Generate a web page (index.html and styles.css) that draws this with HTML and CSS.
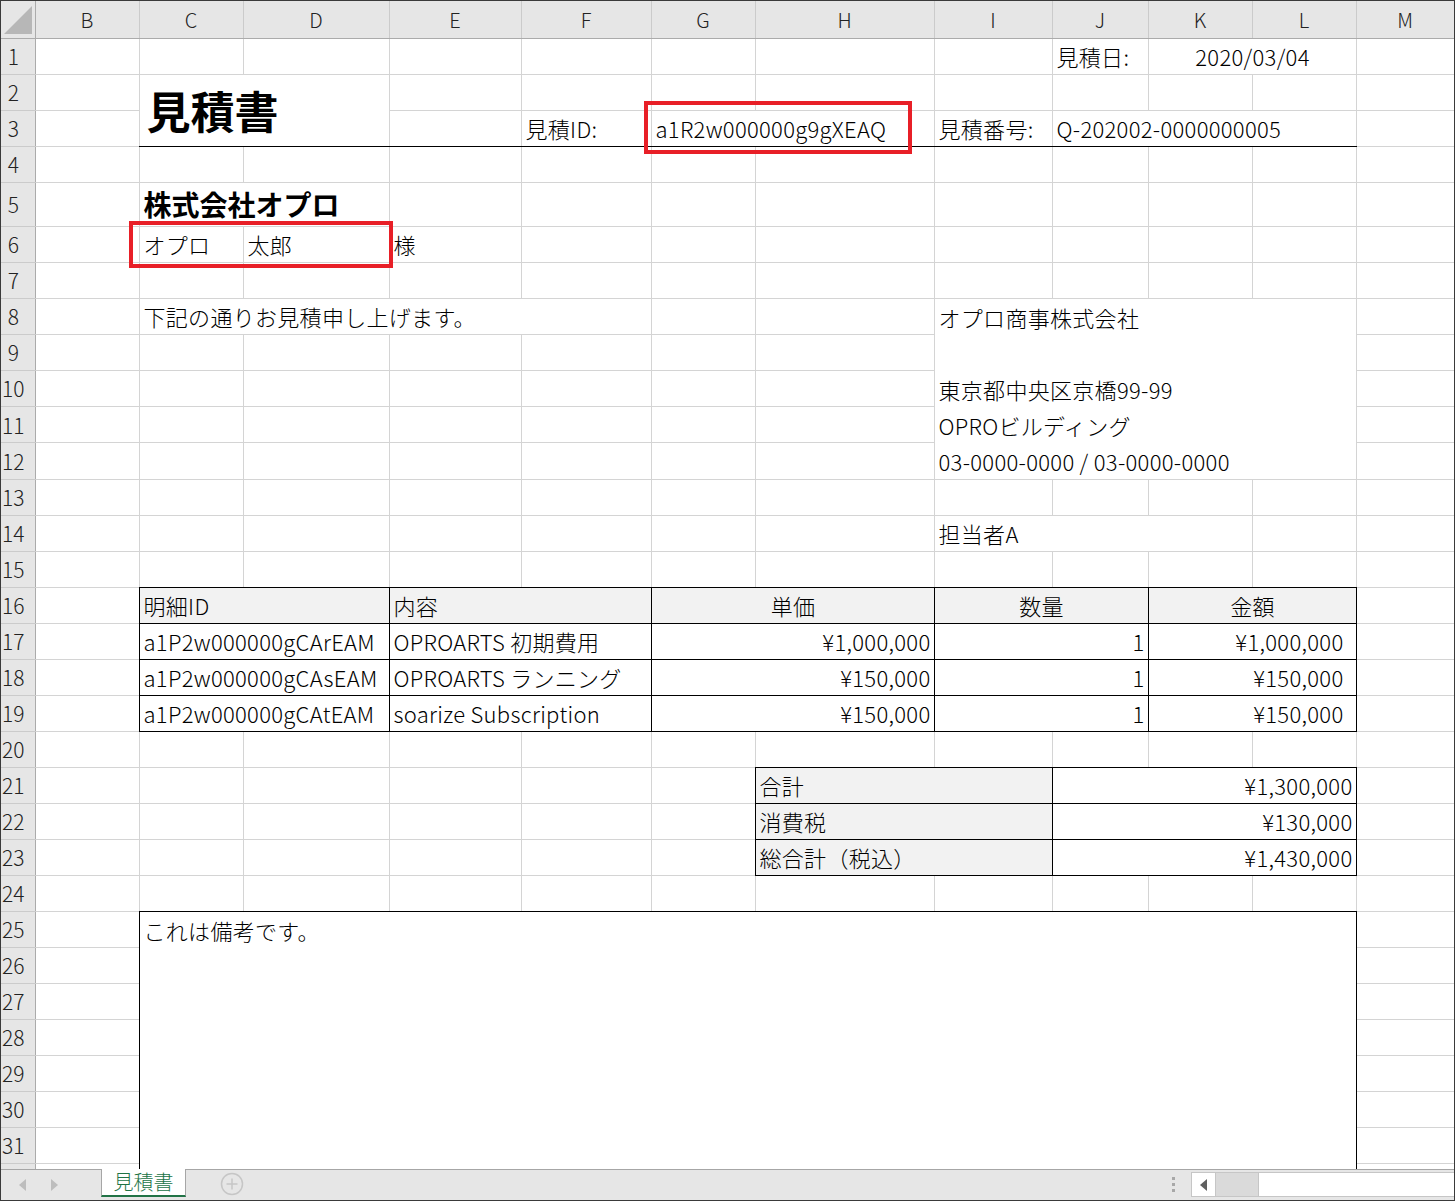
FILE: index.html
```html
<!DOCTYPE html>
<html lang="ja">
<head>
  <meta charset="UTF-8">
  <title>見積書</title>
  <link rel="stylesheet" href="styles.css">
</head>
<body>
  <div class="window">
    <!-- Feuille -->
    <div class="sheet-area">
      <table class="sheet">
        <colgroup>
          <col class="c-hdr"><col class="c-b"><col class="c-c"><col class="c-d"><col class="c-e"><col class="c-f"><col class="c-g"><col class="c-h"><col class="c-i"><col class="c-j"><col class="c-k"><col class="c-l"><col class="c-m">
        </colgroup>
        <thead>
          <tr class="col-head">
            <th class="corner"><svg width="28" height="28" viewBox="0 0 28 28"><polygon points="28,0 28,28 0,28" fill="#b7b7b7"/></svg></th>
            <th>B</th><th>C</th><th>D</th><th>E</th><th>F</th><th>G</th><th>H</th><th>I</th><th>J</th><th>K</th><th>L</th><th>M</th>
          </tr>
        </thead>
        <tbody>
          <tr><th class="rh">1</th><td></td><td></td><td></td><td></td><td></td><td></td><td></td><td></td><td>見積日:</td><td colspan="2" class="center">2020/03/04</td><td></td></tr>
          <tr><th class="rh">2</th><td></td><td colspan="2" rowspan="2" class="title bb">見積書</td><td></td><td></td><td></td><td></td><td></td><td></td><td></td><td></td><td></td></tr>
          <tr><th class="rh">3</th><td></td><td class="bb"></td><td class="bb">見積ID:</td><td colspan="2" class="bb">a1R2w000000g9gXEAQ</td><td class="bb">見積番号:</td><td colspan="3" class="bb">Q-202002-0000000005</td><td></td></tr>
          <tr><th class="rh">4</th><td></td><td></td><td></td><td></td><td></td><td></td><td></td><td></td><td></td><td></td><td></td><td></td></tr>
          <tr class="tall"><th class="rh">5</th><td></td><td colspan="2" class="company">株式会社オプロ</td><td></td><td></td><td></td><td></td><td></td><td></td><td></td><td></td><td></td></tr>
          <tr><th class="rh">6</th><td></td><td>オプロ</td><td>太郎</td><td>様</td><td></td><td></td><td></td><td></td><td></td><td></td><td></td><td></td></tr>
          <tr><th class="rh">7</th><td></td><td></td><td></td><td></td><td></td><td></td><td></td><td></td><td></td><td></td><td></td><td></td></tr>
          <tr>
            <th class="rh">8</th><td></td><td colspan="4">下記の通りお見積申し上げます。</td><td></td><td></td>
            <td colspan="4" rowspan="5" class="addr">
              <div>オプロ商事株式会社</div>
              <div>&nbsp;</div>
              <div>東京都中央区京橋99-99</div>
              <div>OPROビルディング</div>
              <div>03-0000-0000 / 03-0000-0000</div>
            </td>
            <td></td>
          </tr>
          <tr><th class="rh">9</th><td></td><td></td><td></td><td></td><td></td><td></td><td></td><td></td></tr>
          <tr><th class="rh">10</th><td></td><td></td><td></td><td></td><td></td><td></td><td></td><td></td></tr>
          <tr><th class="rh">11</th><td></td><td></td><td></td><td></td><td></td><td></td><td></td><td></td></tr>
          <tr><th class="rh">12</th><td></td><td></td><td></td><td></td><td></td><td></td><td></td><td></td></tr>
          <tr><th class="rh">13</th><td></td><td></td><td></td><td></td><td></td><td></td><td></td><td></td><td></td><td></td><td></td><td></td></tr>
          <tr><th class="rh">14</th><td></td><td></td><td></td><td></td><td></td><td></td><td></td><td colspan="3">担当者A</td><td></td><td></td></tr>
          <tr><th class="rh">15</th><td></td><td></td><td></td><td></td><td></td><td></td><td></td><td></td><td></td><td></td><td></td><td></td></tr>
          <!-- Détail -->
          <tr><th class="rh">16</th><td></td><td colspan="2" class="box head">明細ID</td><td colspan="2" class="box head">内容</td><td colspan="2" class="box head center">単価</td><td colspan="2" class="box head center">数量</td><td colspan="2" class="box head center">金額</td><td></td></tr>
          <tr><th class="rh">17</th><td></td><td colspan="2" class="box">a1P2w000000gCArEAM</td><td colspan="2" class="box">OPROARTS 初期費用</td><td colspan="2" class="box num">¥1,000,000</td><td colspan="2" class="box num">1</td><td colspan="2" class="box num amount">¥1,000,000</td><td></td></tr>
          <tr><th class="rh">18</th><td></td><td colspan="2" class="box">a1P2w000000gCAsEAM</td><td colspan="2" class="box">OPROARTS ランニング</td><td colspan="2" class="box num">¥150,000</td><td colspan="2" class="box num">1</td><td colspan="2" class="box num amount">¥150,000</td><td></td></tr>
          <tr><th class="rh">19</th><td></td><td colspan="2" class="box">a1P2w000000gCAtEAM</td><td colspan="2" class="box">soarize Subscription</td><td colspan="2" class="box num">¥150,000</td><td colspan="2" class="box num">1</td><td colspan="2" class="box num amount">¥150,000</td><td></td></tr>
          <tr><th class="rh">20</th><td></td><td></td><td></td><td></td><td></td><td></td><td></td><td></td><td></td><td></td><td></td><td></td></tr>
          <!-- Totaux -->
          <tr><th class="rh">21</th><td></td><td></td><td></td><td></td><td></td><td></td><td colspan="2" class="box head">合計</td><td colspan="3" class="box num">¥1,300,000</td><td></td></tr>
          <tr><th class="rh">22</th><td></td><td></td><td></td><td></td><td></td><td></td><td colspan="2" class="box head">消費税</td><td colspan="3" class="box num">¥130,000</td><td></td></tr>
          <tr><th class="rh">23</th><td></td><td></td><td></td><td></td><td></td><td></td><td colspan="2" class="box head">総合計（税込）</td><td colspan="3" class="box num">¥1,430,000</td><td></td></tr>
          <tr><th class="rh">24</th><td></td><td></td><td></td><td></td><td></td><td></td><td></td><td></td><td></td><td></td><td></td><td></td></tr>
          <!-- Remarques -->
          <tr><th class="rh">25</th><td></td><td colspan="10" rowspan="8" class="box note">これは備考です。</td><td></td></tr>
          <tr><th class="rh">26</th><td></td><td></td></tr>
          <tr><th class="rh">27</th><td></td><td></td></tr>
          <tr><th class="rh">28</th><td></td><td></td></tr>
          <tr><th class="rh">29</th><td></td><td></td></tr>
          <tr><th class="rh">30</th><td></td><td></td></tr>
          <tr><th class="rh">31</th><td></td><td></td></tr>
          <tr><th class="rh"></th><td></td><td></td></tr>
        </tbody>
      </table>

      <!-- Annotations rouges -->
      <div class="mark mark-id"></div>
      <div class="mark mark-name"></div>
    </div>

    <!-- Barre d'onglets -->
    <div class="tabbar">
      <div class="tab-nav">
        <svg width="8" height="12" viewBox="0 0 8 12"><polygon points="7,0 7,12 0,6" fill="#bdbdbd"/></svg>
        <svg width="8" height="12" viewBox="0 0 8 12"><polygon points="1,0 1,12 8,6" fill="#bdbdbd"/></svg>
      </div>
      <div class="tab">見積書</div>
      <div class="add-sheet">
        <svg width="24" height="24" viewBox="0 0 24 24">
          <circle cx="12" cy="12" r="10.5" fill="none" stroke="#c6c6c6" stroke-width="1.5"/>
          <path d="M12 6.5v11M6.5 12h11" stroke="#c6c6c6" stroke-width="1.5"/>
        </svg>
      </div>
      <div class="spacer"></div>
      <div class="grip"><span></span><span></span><span></span></div>
      <div class="hscroll">
        <div class="hscroll-btn">
          <svg width="8" height="12" viewBox="0 0 8 12"><polygon points="7,0 7,12 0,6" fill="#606060"/></svg>
        </div>
        <div class="hscroll-thumb"></div>
        <div class="hscroll-track"></div>
      </div>
    </div>
  </div>
</body>
</html>
```

FILE: styles.css
```css
/* Base */
* {
  box-sizing: border-box;
}

html, body {
  margin: 0;
  padding: 0;
}

body {
  font-family: "Noto Sans CJK JP", "Noto Sans", sans-serif;
  color: #000;
  background: #fff;
}

/* Fenêtre */
.window {
  width: 1455px;
  height: 1201px;
  border: 1px solid #3a3a3a;
  display: flex;
  flex-direction: column;
  overflow: hidden;
}

.sheet-area {
  position: relative;
  flex: 1;
  overflow: hidden;
}

/* Grille */
.sheet {
  border-collapse: collapse;
  table-layout: fixed;
  width: 1453px;
  font-size: 22px;
  font-weight: 300;
  letter-spacing: 0.3px;
}

.sheet col {
  border-right: 1px solid #d4d4d4;
}

.c-hdr { width: 34px; }
.c-b { width: 104px; }
.c-c { width: 104px; }
.c-d { width: 146px; }
.c-e { width: 132px; }
.c-f { width: 130px; }
.c-g { width: 104px; }
.c-h { width: 179px; }
.c-i { width: 118px; }
.c-j { width: 96px; }
.c-k { width: 104px; }
.c-l { width: 104px; }
.c-m { width: 98px; }

.sheet tbody tr {
  height: 36px;
  border-bottom: 1px solid #d4d4d4;
}

.sheet tbody tr.tall {
  height: 44px;
}

.sheet td {
  padding: 0 3px 0 4px;
  white-space: nowrap;
  overflow: hidden;
  vertical-align: middle;
  line-height: 1.3;
}

/* En-têtes */
.col-head th {
  height: 37px;
  padding: 0;
  background: #e6e6e6;
  border-right: 1px solid #cbcbcb;
  border-bottom: 1px solid #ababab;
  font-weight: 300;
  font-size: 20px;
  letter-spacing: 0;
  color: #222;
}

.col-head th.corner {
  text-align: right;
  vertical-align: bottom;
  padding: 0 3px 4px 0;
  line-height: 0;
  border-right: 1px solid #ababab;
}

.rh {
  background: #e6e6e6;
  border-right: 1px solid #ababab;
  border-bottom: 1px solid #cbcbcb;
  font-weight: 300;
  font-size: 21px;
  letter-spacing: 0;
  color: #222;
  text-align: center;
  padding: 0 9px 0 0;
}

/* Cellules */
.center {
  text-align: center;
}

.bb {
  border-bottom: 1px solid #000;
}

.sheet td.title {
  font-size: 44px;
  font-weight: bold;
  letter-spacing: 0;
  padding-left: 7px;
  line-height: 1.2;
}

.sheet td.company {
  font-size: 28px;
  font-weight: bold;
  letter-spacing: 0;
}

.sheet td.addr {
  vertical-align: top;
  line-height: 36px;
  padding-top: 0;
}

.box {
  border: 1px solid #000;
}

.head {
  background: #f2f2f2;
}

.sheet td.num {
  text-align: right;
  padding-right: 3px;
}

.sheet td.amount {
  padding-right: 12px;
}

.sheet td.note {
  vertical-align: top;
  line-height: 36px;
}

/* Annotations */
.mark {
  position: absolute;
  border: 4px solid #e81f27;
}

.mark-id {
  left: 643px;
  top: 100px;
  width: 268px;
  height: 53px;
}

.mark-name {
  left: 128px;
  top: 220px;
  width: 264px;
  height: 47px;
}

/* Barre d'onglets */
.tabbar {
  flex: none;
  height: 31px;
  background: #e6e6e6;
  border-top: 1px solid #a6a6a6;
  display: flex;
  align-items: flex-start;
}

.tab-nav {
  width: 100px;
  height: 29px;
  display: flex;
  align-items: center;
  gap: 23px;
  padding-left: 18px;
}

.tab {
  width: 85px;
  height: 28px;
  margin-top: -1px;
  background: #fff;
  border-left: 1px solid #a6a6a6;
  border-right: 1px solid #a6a6a6;
  border-bottom: 2px solid #217346;
  color: #217346;
  font-size: 20px;
  font-weight: 300;
  line-height: 25px;
  text-align: center;
}

.add-sheet {
  margin-left: 34px;
  padding-top: 2px;
  line-height: 0;
}

.spacer {
  flex: 1;
}

.grip {
  display: flex;
  flex-direction: column;
  gap: 3px;
  padding-top: 7px;
  margin-right: 16px;
}

.grip span {
  width: 3px;
  height: 3px;
  background: #a8a8a8;
}

.hscroll {
  width: 263px;
  height: 25px;
  margin-top: 2px;
  display: flex;
  border: 1px solid #c6c6c6;
  border-right: none;
}

.hscroll-btn {
  width: 24px;
  background: #fff;
  border-right: 1px solid #c6c6c6;
  display: flex;
  align-items: center;
  justify-content: center;
}

.hscroll-thumb {
  width: 42px;
  background: #dadada;
}

.hscroll-track {
  flex: 1;
  background: #fff;
  border-left: 1px solid #c6c6c6;
}
```
